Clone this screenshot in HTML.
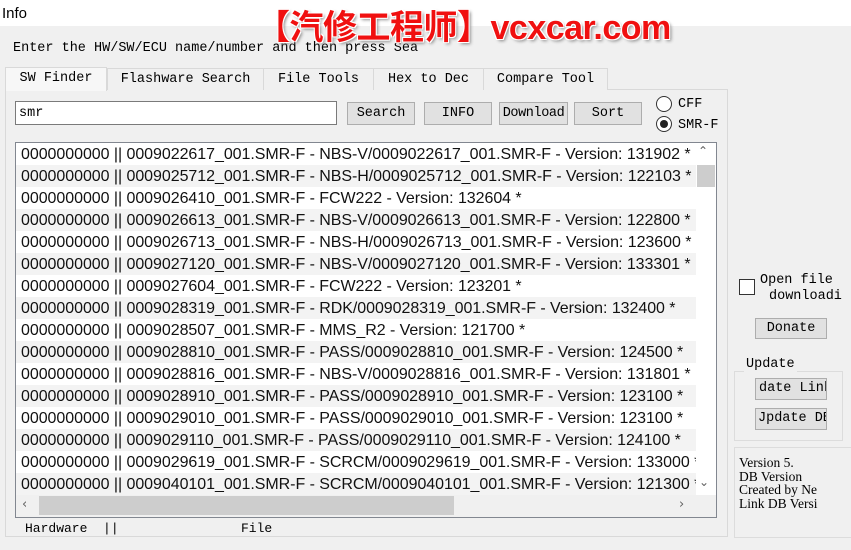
<!DOCTYPE html>
<html><head><meta charset="utf-8"><style>
*{margin:0;padding:0;box-sizing:border-box}
body{width:851px;height:550px;background:#f0f0f0;position:relative;overflow:hidden;font-family:"Liberation Mono",monospace;font-size:13.5px;color:#000}
.a{position:absolute;white-space:nowrap}
.btn{position:absolute;background:#e1e1e1;border:1px solid #adadad;text-align:center;line-height:20px;font-size:13.5px;overflow:hidden;white-space:nowrap}
.tab{position:absolute;top:68px;height:22px;border:1px solid #d9d9d9;border-bottom:none;background:#f0f0f0;text-align:center;line-height:22px}
.row{height:22px;line-height:23px;font-family:"Liberation Sans",sans-serif;font-size:16px;color:#111;padding-left:5px;white-space:nowrap;letter-spacing:-0.05px}
.row:nth-child(even){background:#f3f3f3}
</style></head><body>
<div class="a" style="left:0;top:0;width:851px;height:26px;background:#fff"></div>
<div class="a" style="left:2px;top:5px;font-family:'Liberation Sans',sans-serif;font-size:15px">Info</div>
<div class="a" style="left:13px;top:41px">Enter the HW/SW/ECU name/number and then press Sea</div>
<div class="a" style="left:256px;top:0px;font-family:'Liberation Sans','Noto Sans CJK SC',sans-serif;font-weight:bold;font-size:34px;color:#f01010;letter-spacing:-0.5px;text-shadow:-1px -1px 0 #fff,1px -1px 0 #fff,-1px 1px 0 #fff,1px 1px 0 #fff,2px 2px 3px #888">【汽修工程师】vcxcar.com</div>
<div class="a" style="left:5px;top:89px;width:723px;height:448px;border:1px solid #d9d9d9;background:#f0f0f0"></div>
<div class="tab" style="left:5px;top:67px;width:102px;height:24px;background:#f7f7f7;z-index:2">SW Finder</div>
<div class="tab" style="left:107px;width:157px">Flashware Search</div>
<div class="tab" style="left:263px;width:111px">File Tools</div>
<div class="tab" style="left:373px;width:111px">Hex to Dec</div>
<div class="tab" style="left:483px;width:125px">Compare Tool</div>
<div class="a" style="left:15px;top:101px;width:322px;height:24px;background:#fff;border:1px solid #7a7a7a;line-height:24px;padding-left:3px">smr</div>
<div class="btn" style="left:347px;top:102px;width:68px;height:23px;line-height:22px">Search</div>
<div class="btn" style="left:424px;top:102px;width:68px;height:23px;line-height:22px">INFO</div>
<div class="btn" style="left:499px;top:102px;width:69px;height:23px;line-height:22px;letter-spacing:-0.4px">Download</div>
<div class="btn" style="left:574px;top:102px;width:68px;height:23px;line-height:22px">Sort</div>
<div class="a" style="left:656px;top:96px;width:16px;height:16px;border-radius:50%;border:1px solid #333;background:#fff"></div>
<div class="a" style="left:678px;top:97px">CFF</div>
<div class="a" style="left:656px;top:116px;width:16px;height:16px;border-radius:50%;border:1px solid #333;background:#fff"></div>
<div class="a" style="left:660px;top:120px;width:8px;height:8px;border-radius:50%;background:#222"></div>
<div class="a" style="left:678px;top:118px">SMR-F</div>
<div class="a" style="left:15px;top:142px;width:702px;height:376px;border:1px solid #828790;background:#fff;overflow:hidden">
<div style="width:680px;height:352px;overflow:hidden">
<div class="row">0000000000 || 0009022617_001.SMR-F - NBS-V/0009022617_001.SMR-F - Version: 131902 *</div>
<div class="row">0000000000 || 0009025712_001.SMR-F - NBS-H/0009025712_001.SMR-F - Version: 122103 *</div>
<div class="row">0000000000 || 0009026410_001.SMR-F - FCW222 - Version: 132604 *</div>
<div class="row">0000000000 || 0009026613_001.SMR-F - NBS-V/0009026613_001.SMR-F - Version: 122800 *</div>
<div class="row">0000000000 || 0009026713_001.SMR-F - NBS-H/0009026713_001.SMR-F - Version: 123600 *</div>
<div class="row">0000000000 || 0009027120_001.SMR-F - NBS-V/0009027120_001.SMR-F - Version: 133301 *</div>
<div class="row">0000000000 || 0009027604_001.SMR-F - FCW222 - Version: 123201 *</div>
<div class="row">0000000000 || 0009028319_001.SMR-F - RDK/0009028319_001.SMR-F - Version: 132400 *</div>
<div class="row">0000000000 || 0009028507_001.SMR-F - MMS_R2 - Version: 121700 *</div>
<div class="row">0000000000 || 0009028810_001.SMR-F - PASS/0009028810_001.SMR-F - Version: 124500 *</div>
<div class="row">0000000000 || 0009028816_001.SMR-F - NBS-V/0009028816_001.SMR-F - Version: 131801 *</div>
<div class="row">0000000000 || 0009028910_001.SMR-F - PASS/0009028910_001.SMR-F - Version: 123100 *</div>
<div class="row">0000000000 || 0009029010_001.SMR-F - PASS/0009029010_001.SMR-F - Version: 123100 *</div>
<div class="row">0000000000 || 0009029110_001.SMR-F - PASS/0009029110_001.SMR-F - Version: 124100 *</div>
<div class="row">0000000000 || 0009029619_001.SMR-F - SCRCM/0009029619_001.SMR-F - Version: 133000 *</div>
<div class="row">0000000000 || 0009040101_001.SMR-F - SCRCM/0009040101_001.SMR-F - Version: 121300 *</div>
</div>
<div class="a" style="left:680px;top:0;width:20px;height:352px;background:#fff"></div>
<div class="a" style="left:682px;top:1px;font-family:'DejaVu Sans',sans-serif;font-size:12px;color:#606060">&#8963;</div>
<div class="a" style="left:681px;top:22px;width:18px;height:22px;background:#cdcdcd"></div>
<div class="a" style="left:683px;top:332px;font-family:'DejaVu Sans',sans-serif;font-size:12px;color:#606060">&#8964;</div>
<div class="a" style="left:0;top:352px;width:680px;height:22px;background:#f0f0f0"></div>
<div class="a" style="left:23px;top:353px;width:415px;height:19px;background:#cdcdcd"></div>
<div class="a" style="left:6px;top:354px;font-family:'DejaVu Sans',sans-serif;font-size:13px;color:#606060">&#8249;</div>
<div class="a" style="left:663px;top:354px;font-family:'DejaVu Sans',sans-serif;font-size:13px;color:#606060">&#8250;</div>
<div class="a" style="left:680px;top:352px;width:20px;height:22px;background:#f0f0f0"></div>
</div>
<div class="a" style="left:25px;top:521px;font-size:13px">Hardware &nbsp;||</div>
<div class="a" style="left:241px;top:521px;font-size:13px">File</div>
<div class="a" style="left:739px;top:279px;width:16px;height:16px;border:1px solid #333;background:#fff"></div>
<div class="a" style="left:760px;top:273px">Open file</div>
<div class="a" style="left:769px;top:289px">downloadi</div>
<div class="btn" style="left:755px;top:318px;width:72px;height:21px;line-height:20px">Donate</div>
<div class="a" style="left:734px;top:371px;width:109px;height:70px;border:1px solid #dcdcdc"></div>
<div class="a" style="left:744px;top:357px;background:#f0f0f0;padding:0 2px">Update</div>
<div class="btn" style="left:755px;top:378px;width:72px;height:22px;text-align:left;padding-left:3px">date Link</div>
<div class="btn" style="left:755px;top:408px;width:72px;height:22px;text-align:left;padding-left:2px">Jpdate DB</div>
<div class="a" style="left:734px;top:447px;width:120px;height:91px;border:1px solid #dcdcdc"></div>
<div class="a" style="left:739px;top:456px;font-family:'Liberation Serif',serif;font-size:13.5px;line-height:13.5px">Version 5.<br>DB Version<br>Created by Ne<br>Link DB Versi</div>
</body></html>
